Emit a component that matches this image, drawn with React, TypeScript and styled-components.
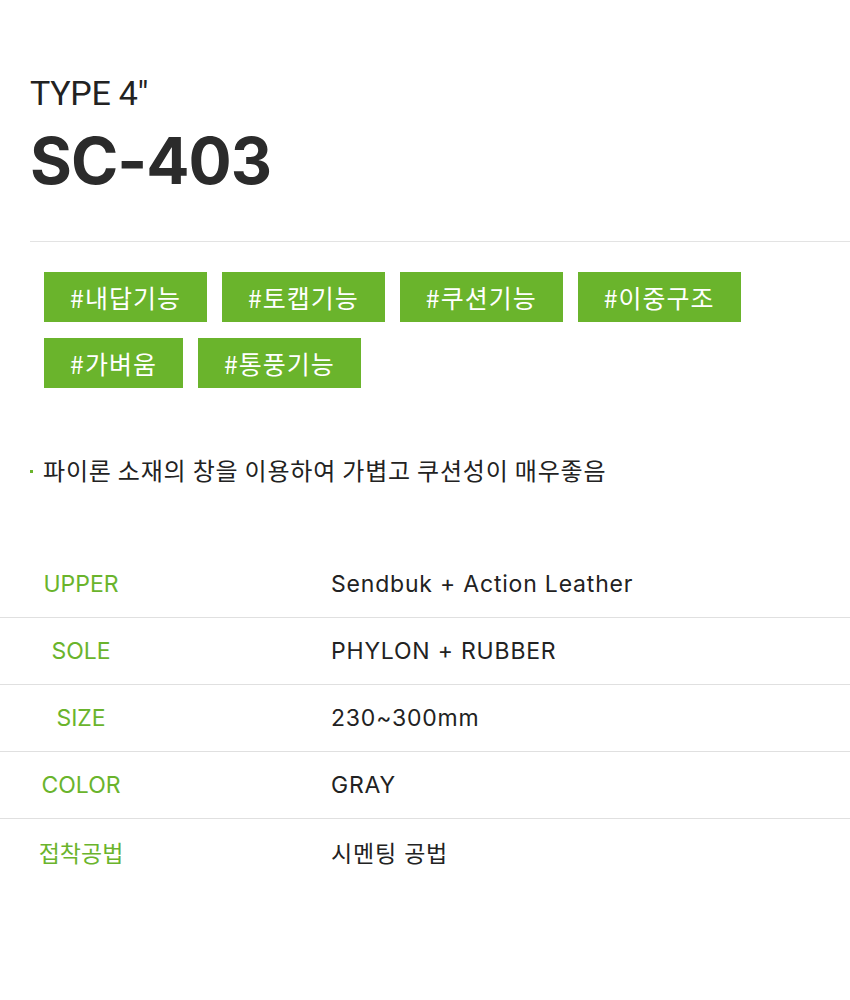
import styled, { createGlobalStyle } from "styled-components";

const GlobalStyle = createGlobalStyle`
  body {
    margin: 0;
    background: #fff;
    font-family: "Noto Sans CJK KR", "Noto Sans", sans-serif;
  }
`;

const tags = ["#내답기능", "#토캡기능", "#쿠션기능", "#이중구조", "#가벼움", "#통풍기능"];

const specs = [
  { label: "UPPER", value: "Sendbuk + Action Leather" },
  { label: "SOLE", value: "PHYLON + RUBBER" },
  { label: "SIZE", value: "230~300mm" },
  { label: "COLOR", value: "GRAY" },
  { label: "접착공법", value: "시멘팅 공법" },
];

export default function App() {
  return (
    <>
      <GlobalStyle />
      <Page>
        <Header>
          <Type>TYPE 4"</Type>
          <Model>SC-403</Model>
        </Header>
        <Divider />
        <TagList>
          {tags.map((t) => (
            <Tag key={t}>{t}</Tag>
          ))}
        </TagList>
        <Point>파이론 소재의 창을 이용하여 가볍고 쿠션성이 매우좋음</Point>
        <SpecTable>
          {specs.map((s) => (
            <SpecRow key={s.label}>
              <SpecLabel>{s.label}</SpecLabel>
              <SpecValue>{s.value}</SpecValue>
            </SpecRow>
          ))}
        </SpecTable>
      </Page>
    </>
  );
}

const Page = styled.div`
  width: 850px;
  min-height: 1000px;
  padding-top: 73px;
  box-sizing: border-box;
`;

const Header = styled.div`
  padding-left: 30px;
  display: flex;
  flex-direction: column;
  gap: 15px;
`;

const Type = styled.div`
  font-family: Roboto, "Liberation Sans", sans-serif;
  font-size: 34px;
  line-height: 1.2;
  color: #222;
  letter-spacing: -0.3px;
`;

const Model = styled.div`
  font-family: Inter, "Liberation Sans", sans-serif;
  font-weight: 700;
  font-size: 64px;
  line-height: 1;
  color: #2b2b2b;
  letter-spacing: -1px;
`;

const Divider = styled.div`
  margin: 48px 0 0 30px;
  height: 1px;
  background: #e3e3e3;
`;

const TagList = styled.div`
  margin: 30px 0 0 44px;
  display: flex;
  flex-wrap: wrap;
  gap: 16px 15px;
  width: 720px;
`;

const Tag = styled.div`
  height: 50px;
  padding: 0 26px;
  display: flex;
  align-items: center;
  background: #6ab42c;
  color: #fff;
  font-size: 25px;
  font-weight: 400;
  letter-spacing: 1px;
  box-sizing: border-box;
`;

const Point = styled.div`
  margin: 66px 0 0 30px;
  display: flex;
  align-items: center;
  gap: 10px;
  font-size: 24px;
  line-height: 1.3;
  color: #222;
  letter-spacing: 0.8px;
  &::before {
    content: "";
    width: 3px;
    height: 3px;
    background: #6ab42c;
    margin-top: 4px;
  }
`;

const SpecTable = styled.div`
  margin-top: 66px;
  display: flex;
  flex-direction: column;
`;

const SpecRow = styled.div`
  display: grid;
  grid-template-columns: 162px 1fr;
  align-items: center;
  height: 66px;
  border-top: 1px solid #e0e0e0;
  &:first-child {
    border-top: none;
  }
`;

const SpecLabel = styled.div`
  text-align: center;
  font-family: Inter, "Noto Sans CJK KR", sans-serif;
  font-size: 23px;
  color: #6ab42c;
`;

const SpecValue = styled.div`
  margin-left: 169px;
  font-family: Inter, "Noto Sans CJK KR", sans-serif;
  font-size: 23px;
  color: #222;
  letter-spacing: 0.8px;
`;
